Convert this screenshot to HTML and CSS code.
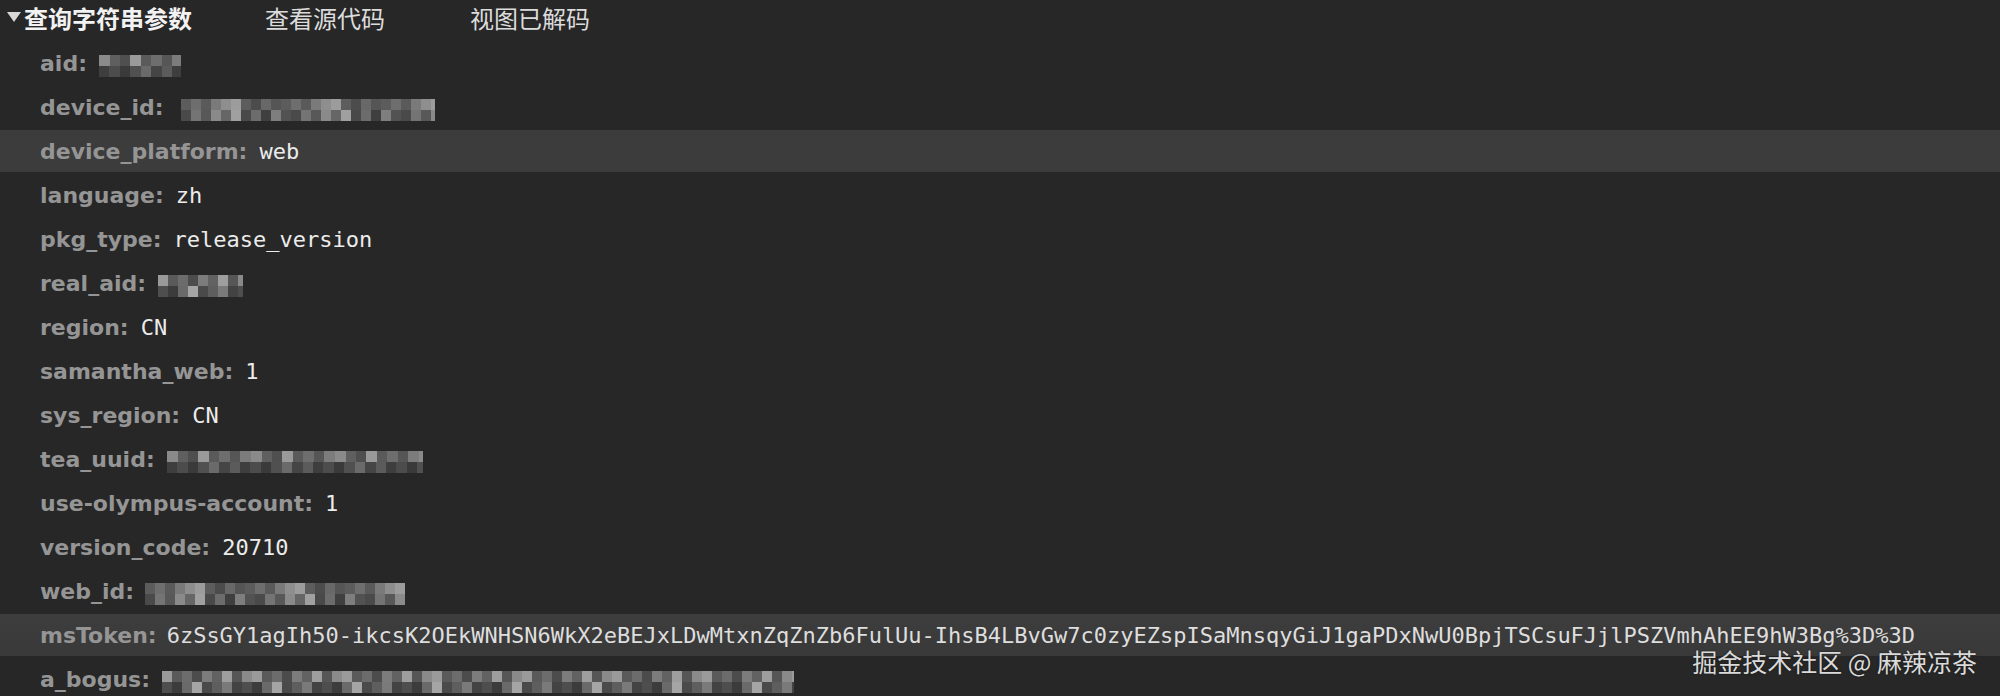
FILE: index.html
```html
<!DOCTYPE html>
<html lang="zh">
<head>
<meta charset="utf-8">
<title>查询字符串参数</title>
<link rel="stylesheet" href="styles.css">
</head>
<body>
<div class="panel">
  <div class="header">
    <svg class="caret" width="14" height="10" viewBox="0 0 14 10"><path d="M0 0 H14 L7 10 Z" fill="#d8d8d8"/></svg>
    <span class="title">查询字符串参数</span>
    <span class="tab tab-source">查看源代码</span>
    <span class="tab tab-decoded">视图已解码</span>
  </div>
  <div class="params">
    <div class="row"><span class="key">aid:</span><span class="mosaic mz-a mz-aid"></span></div>
    <div class="row"><span class="key">device_id:</span><span class="mosaic mz-b mz-device"></span></div>
    <div class="row row-hl"><span class="key">device_platform:</span><span class="val">web</span></div>
    <div class="row"><span class="key">language:</span><span class="val">zh</span></div>
    <div class="row"><span class="key">pkg_type:</span><span class="val">release_version</span></div>
    <div class="row"><span class="key">real_aid:</span><span class="mosaic mz-c mz-real"></span></div>
    <div class="row"><span class="key">region:</span><span class="val">CN</span></div>
    <div class="row"><span class="key">samantha_web:</span><span class="val">1</span></div>
    <div class="row"><span class="key">sys_region:</span><span class="val">CN</span></div>
    <div class="row"><span class="key">tea_uuid:</span><span class="mosaic mz-a mz-tea"></span></div>
    <div class="row"><span class="key">use-olympus-account:</span><span class="val">1</span></div>
    <div class="row"><span class="key">version_code:</span><span class="val">20710</span></div>
    <div class="row"><span class="key">web_id:</span><span class="mosaic mz-b mz-web"></span></div>
    <div class="row row-hl row-token"><span class="key">msToken:</span><span class="val val-token">6zSsGY1agIh50-ikcsK2OEkWNHSN6WkX2eBEJxLDwMtxnZqZnZb6FulUu-IhsB4LBvGw7c0zyEZspISaMnsqyGiJ1gaPDxNwU0BpjTSCsuFJjlPSZVmhAhEE9hW3Bg%3D%3D</span></div>
    <div class="row"><span class="key">a_bogus:</span><span class="mosaic mz-c mz-bogus"></span></div>
  </div>
  <div class="watermark">掘金技术社区 @ 麻辣凉茶</div>
</div>
</body>
</html>
```
FILE: styles.css
```css
html, body {
  margin: 0;
  padding: 0;
  background: #272727;
}

.panel {
  position: relative;
  width: 2000px;
  height: 696px;
  overflow: hidden;
  background: #272727;
}

.header {
  display: flex;
  align-items: center;
  height: 35px;
  padding-left: 7px;
  font-family: "Noto Sans CJK SC", "Noto Sans", sans-serif;
  font-size: 24px;
  line-height: 35px;
}

.caret {
  display: block;
  margin-top: -2px;
  margin-right: 3px;
}

.title {
  font-weight: 700;
  color: #f2f2f2;
}

.tab {
  color: #dcdcdc;
  font-weight: 400;
}

.tab-source {
  margin-left: 73px;
}

.tab-decoded {
  margin-left: 85px;
}

.params {
  display: flex;
  flex-direction: column;
  gap: 2px;
  padding-top: 7px;
}

.row {
  display: flex;
  align-items: center;
  height: 42px;
  padding-left: 40px;
  white-space: nowrap;
}

.row-hl {
  background: #3c3c3c;
}

.row-token {
  background: linear-gradient(180deg, #3d3d3d 0%, #393939 100%);
}

.key {
  font-family: "DejaVu Sans", "Liberation Sans", sans-serif;
  font-weight: 700;
  font-size: 22px;
  color: #959595;
}

.val {
  margin-left: 12px;
  font-family: "DejaVu Sans Mono", "Liberation Mono", monospace;
  font-size: 22px;
  color: #ececec;
}

.val-token {
  margin-left: 10px;
  color: #dedede;
}

.mosaic {
  display: block;
  height: 22px;
  margin-left: 12px;
  margin-top: 6px;
  background-repeat: no-repeat;
  background-size: 100% 11px, 100% 11px;
  background-position: 0 0, 0 11px;
}

.mz-a {
  background-image:
    repeating-linear-gradient(90deg, #8a8a8a 0 11px, #5f5f5f 11px 21px, #4f4f4f 21px 31px, #9a9a9a 31px 42px, #5a5a5a 42px 52px, #6e6e6e 52px 63px, #565656 63px 73px, #7c7c7c 73px 84px),
    repeating-linear-gradient(90deg, #3e3e3e 0 10px, #4c4c4c 10px 21px, #3a3a3a 21px 31px, #505050 31px 42px, #6a6a6a 42px 52px, #454545 52px 63px, #5b5b5b 63px 73px);
}

.mz-b {
  background-image:
    repeating-linear-gradient(90deg, #5c5c5c 0 10px, #6e6e6e 10px 20px, #5a5a5a 20px 30px, #7a7a7a 30px 40px, #8e8e8e 40px 50px, #9c9c9c 50px 60px, #5d5d5d 60px 70px, #4c4c4c 70px 80px, #686868 80px 90px, #555555 90px 100px),
    repeating-linear-gradient(90deg, #4a4a4a 0 10px, #747474 10px 20px, #585858 20px 30px, #8a8a8a 30px 40px, #666666 40px 50px, #a0a0a0 50px 60px, #494949 60px 70px, #6c6c6c 70px 80px, #3f3f3f 80px 90px, #7e7e7e 90px 100px, #525252 100px 110px);
}

.mz-c {
  background-image:
    repeating-linear-gradient(90deg, #9a9a9a 0 10px, #5a5a5a 10px 20px, #6c6c6c 20px 30px, #4c4c4c 30px 40px, #7c7c7c 40px 50px, #626262 50px 60px, #9e9e9e 60px 70px, #565656 70px 80px, #8a8a8a 80px 90px),
    repeating-linear-gradient(90deg, #4e4e4e 0 10px, #3c3c3c 10px 20px, #6a6a6a 20px 30px, #a5a5a5 30px 40px, #4a4a4a 40px 50px, #5e5e5e 50px 60px, #7a7a7a 60px 70px, #434343 70px 80px);
}

.mz-aid { width: 82px; }
.mz-device { width: 254px; margin-left: 17px; }
.mz-real { width: 85px; }
.mz-tea { width: 256px; margin-left: 12px; }
.mz-web { width: 260px; margin-left: 11px; }
.mz-bogus { width: 632px; margin-left: 12px; }

.watermark {
  position: absolute;
  right: 23px;
  bottom: 20px;
  font-family: "Noto Sans CJK SC", "Noto Sans", sans-serif;
  font-size: 25px;
  line-height: 30px;
  color: #dadada;
  text-shadow: 0 0 2px rgba(0, 0, 0, 0.5);
  white-space: nowrap;
}
```
